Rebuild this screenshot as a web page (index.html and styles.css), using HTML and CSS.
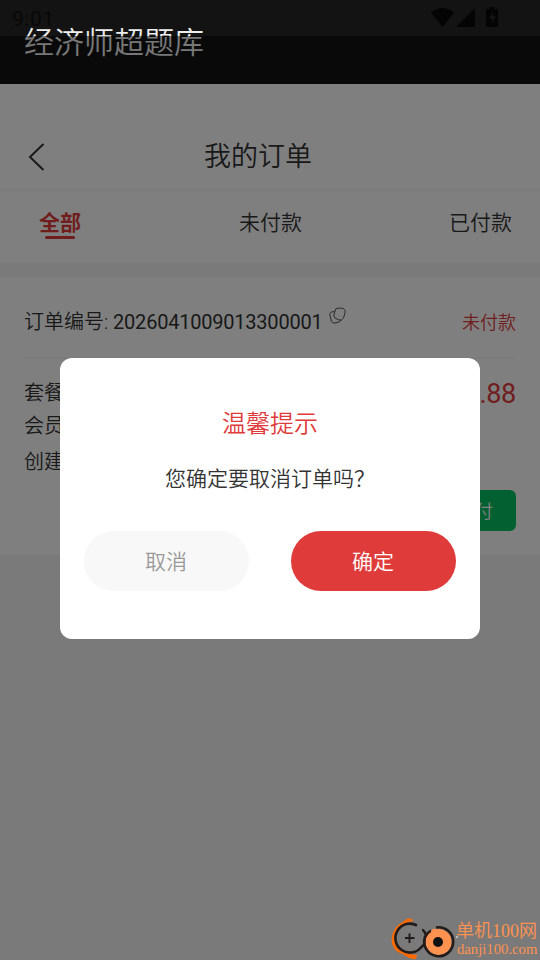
FILE: index.html
```html
<!DOCTYPE html>
<html lang="zh-CN">
<head>
<meta charset="utf-8">
<title>我的订单</title>
<link rel="stylesheet" href="styles.css">
</head>
<body>
<div class="screen">
  <header class="app-bar">
    <div class="status">
      <span class="clock">9:01</span>
      <svg class="status-icons" width="70" height="22" viewBox="0 0 70 22">
        <path d="M0 5.500Q11.500-3.500 23 5.500L11.500 20Z"/>
        <path d="M44 1V20H25Z"/>
        <path fill-rule="evenodd" d="M58 0h5v2h4v18H55V2h3zM62 4.500L58 12h3v5l4-8h-3z"/>
      </svg>
    </div>
    <div class="app-title">经济师超题库</div>
  </header>
  <nav class="nav">
    <svg class="back" width="18" height="30" viewBox="0 0 18 30"><path d="M15.500 2L2 15L15.500 28"/></svg>
    <h1>我的订单</h1>
  </nav>
  <div class="tabs">
    <span class="tab active">全部</span>
    <span class="tab">未付款</span>
    <span class="tab">已付款</span>
  </div>
  <section class="order">
    <div class="order-head">
      <span class="number">订单编号: <span class="digits">2026041009013300001</span></span>
      <svg class="copy" width="18" height="18" viewBox="0 0 18 18">
        <path d="M7 1.500L12 1Q16.500 1.500 16.200 5L14.500 11Q13 14 9.500 12.800L6 11Q4.500 9.500 5 7Z"/>
        <path d="M5.500 4.500L2.500 5Q.5 6 .8 8L2.500 14.500Q4 16.500 6 16L10.500 14.800L12 13"/>
      </svg>
      <span class="state">未付款</span>
    </div>
    <div class="order-body">
      <div class="labels"><span>套餐</span><span>会员</span><span>创建</span></div>
      <div class="price">.88</div>
    </div>
    <div class="actions"><div class="pay">付</div></div>
  </section>
</div>
<div class="mask">
  <div class="dialog">
    <h2>温馨提示</h2>
    <p>您确定要取消订单吗？</p>
    <div class="buttons">
      <button class="cancel">取消</button>
      <button class="confirm">确定</button>
    </div>
  </div>
</div>
<div class="watermark">
  <svg width="66" height="44" viewBox="0 0 66 44" fill="none">
    <path d="M23 5Q23 2 18 2.500Q15 3 13 6C-2 13-2 35 13 38Q18 43 26 43L27 39C12 38 4 30 4.500 21C5 12 12 7 23 5Z" fill="#ff6a00"/>
    <path d="M27 9.500A14.500 14.500 0 1 0 31 31.500Q37 27 36 19Q34 14 32 14" stroke="#231c1b" stroke-width="2.600"/>
    <path d="M19.500 17.500v9.500M15 22h9.500" stroke="#231c1b" stroke-width="2"/>
    <circle cx="48.500" cy="26" r="13" fill="#ff924f"/>
    <path d="M46 11.500A14.500 14.500 0 1 1 35 21Q37 17 41 14.500" stroke="#231c1b" stroke-width="2.600"/>
    <path d="M41 16Q42 12 46 13L50 17L42 21Z" fill="#ff924f"/>
    <circle cx="48" cy="26" r="5" fill="#111"/>
    <path d="M67 20v2" stroke="#fff" stroke-width="1"/>
  </svg>
  <div class="mark-text"><div class="mark-name">单机100网</div><div class="mark-site">danji100.com</div></div>
</div>
</body>
</html>
```

FILE: styles.css
```css
* { box-sizing: border-box; margin: 0; padding: 0; }
body {
  width: 540px; height: 960px; overflow: hidden; background: #f5f5f5; color: #333;
  font-family: Roboto, "Noto Sans CJK SC", sans-serif; font-weight: 350;
}
.app-bar { height: 84px; background: #131313; overflow: hidden; }
.status { height: 25px; padding: 7px 39px 0 12px; display: flex; justify-content: space-between; }
.clock { font-size: 21px; line-height: 24px; font-weight: 400; color: #080808; letter-spacing: .5px; }
.status-icons { flex: none; fill: #040404; }
.app-title { padding-left: 24px; font-size: 30px; line-height: 36px; color: #eee; }
.nav { height: 108px; padding: 43px 0 0 28px; display: flex; background: #fff; border-bottom: 3px solid #f8f8f8; }
.back { margin-top: 15px; fill: none; stroke: #333; stroke-width: 2; }
.nav h1 { margin-left: 158px; font-size: 27px; line-height: 60px; font-weight: 350; }
.tabs { height: 71px; padding: 16px 28px 0 39px; display: grid; grid-template-columns: 42px 1fr 63px; background: #fff; font-size: 21px; line-height: 30px; }
.tab { height: 31px; text-align: center; padding-left: 11px; }
.tab:last-child { padding-left: 0; }
.tab.active { padding-left: 0; color: #df3b3b; font-weight: 700; display: flex; flex-direction: column; align-items: center; }
.tab.active::after { content: ""; width: 30px; height: 3px; flex: none; margin-top: -2px; border-radius: 2px; background: #df3b3b; }
.order { margin-top: 14px; height: 278px; padding: 0 24px; background: #fff; }
.order-head { height: 82px; padding-top: 30px; display: flex; border-bottom: 2px solid #f6f6f6; font-size: 20px; line-height: 30px; }
.digits { letter-spacing: -.22px; font-weight: 400; }
.copy { margin: 0 0 0 7px; fill: none; stroke: #555; }
.state { margin-left: auto; padding-top: 1px; color: #df3b3b; font-size: 18px; }
.order-body { height: 131px; display: flex; justify-content: space-between; }
.labels { padding-top: 18px; display: flex; flex-direction: column; font-size: 20px; line-height: 33px; }
.labels span:last-child { margin-top: 3px; }
.price { padding-top: 18px; color: #df3b3b; font-size: 27px; line-height: 34px; font-weight: 400; letter-spacing: -.3px; }
.actions { display: flex; justify-content: flex-end; }
.pay { width: 120px; height: 41px; padding-right: 23px; text-align: right; border-radius: 6px; background: #07c160; color: #fff; font-size: 18px; line-height: 43px; }
.mask { position: absolute; top: 36px; left: 0; width: 540px; height: 924px; background: rgba(0,0,0,.5); padding: 322px 60px 0; }
.dialog { height: 281px; padding: 49px 24px 0; border-radius: 12px; background: #fff; text-align: center; }
.dialog h2 { font-size: 24px; line-height: 34px; font-weight: 350; color: #df3b3b; }
.dialog p { margin-top: 23px; font-size: 21px; line-height: 30px; }
.buttons { margin-top: 37px; display: flex; justify-content: space-between; }
.buttons button { width: 165px; height: 60px; padding: 0 1px 2px 0; border: 0; border-radius: 30px; font: 350 21px "Noto Sans CJK SC", sans-serif; }
.cancel { background: #f8f8f8; color: #999; }
.buttons .confirm { background: #df3b3b; color: #fff; }
.watermark { position: absolute; left: 390px; top: 916px; display: flex; color: #ff924f; font-family: "Liberation Serif", "Noto Sans CJK SC", serif; }
.watermark svg { overflow: visible; }
.mark-text { padding-top: 3px; white-space: nowrap; }
.mark-name { font-size: 18px; line-height: 24px; }
.mark-site { margin-left: 1px; font-size: 14.700px; line-height: 12px; }
```
